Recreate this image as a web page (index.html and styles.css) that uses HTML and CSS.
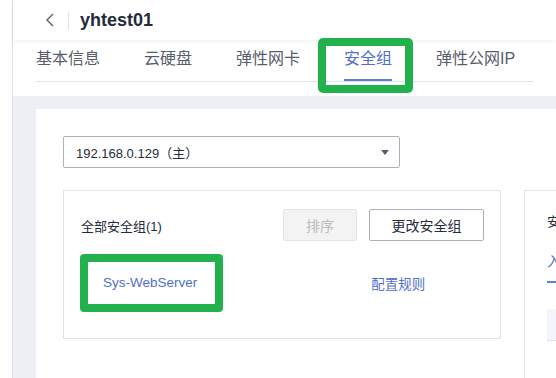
FILE: index.html
```html
<!DOCTYPE html>
<html lang="zh-CN">
<head>
    <meta charset="UTF-8">
    <meta name="viewport" content="width=device-width, initial-scale=1.0">
    <title>yhtest01 - 安全组</title>
    <link rel="stylesheet" href="styles.css">
</head>
<body>
    <div class="page">
        <div class="rail"></div>
        <div class="main">
            <header class="head">
                <svg class="back" width="10" height="14" viewBox="0 0 10 14">
                    <path d="M8 1 L2 7 L8 13" fill="none" stroke="#575d6c" stroke-width="1.4"/>
                </svg>
                <span class="sep"></span>
                <h1 class="title">yhtest01</h1>
            </header>

            <nav class="tabs">
                <div class="tab-list">
                    <a class="tab">基本信息</a>
                    <a class="tab">云硬盘</a>
                    <a class="tab">弹性网卡</a>
                    <a class="tab active">安全组<span class="mark"></span></a>
                    <a class="tab">弹性公网IP</a>
                </div>
            </nav>

            <div class="content">
                <div class="panel">
                    <div class="select">
                        <span>192.168.0.129（主）</span>
                        <span class="caret"></span>
                    </div>

                    <div class="cards">
                        <section class="card sg-card">
                            <div class="sg-head">
                                <span class="sg-count">全部安全组(1)</span>
                                <div class="sg-actions">
                                    <button class="btn btn-sort" disabled>排序</button>
                                    <button class="btn btn-change">更改安全组</button>
                                </div>
                            </div>
                            <div class="sg-row">
                                <a class="sg-name">Sys-WebServer</a>
                                <a class="sg-rule">配置规则</a>
                            </div>
                        </section>

                        <section class="card rule-card">
                            <div class="rule-title">安全组规则</div>
                            <div class="rule-tabs">
                                <a class="rule-tab">入方向规则</a>
                            </div>
                            <div class="rule-table-head"></div>
                        </section>
                    </div>
                </div>
            </div>
        </div>
    </div>
</body>
</html>
```

FILE: styles.css
```css
/* Page frame */
body {
    margin: 0;
    font-family: "Liberation Sans", "Noto Sans CJK SC", sans-serif;
    color: #252b3a;
    background: #fff;
}
.page {
    display: flex;
    height: 100vh;
    overflow: hidden;
}
.rail {
    width: 12px;
    flex: none;
    background: #fff;
    border-right: 1px solid #dcdee3;
}
.main {
    flex: 1;
    min-width: 0;
    display: flex;
    flex-direction: column;
    background: #eef0f5;
}

/* Header */
.head {
    height: 40px;
    flex: none;
    display: flex;
    align-items: center;
    padding-left: 32px;
    background: #fff;
    position: relative;
    z-index: 1;
    box-shadow: 0 2px 4px rgba(0, 0, 0, 0.05);
}
.back {
    display: block;
}
.sep {
    width: 1px;
    height: 17px;
    background: #dfe1e6;
    margin: 0 11px 0 13px;
}
.title {
    margin: 0;
    font-size: 18px;
    font-weight: bold;
    color: #252b3a;
}

/* Tabs */
.tabs {
    flex: none;
    background: #fff;
    padding: 7px 23px 14px;
}
.tab-list {
    display: flex;
    gap: 44px;
    border-bottom: 1px solid #dfe1e6;
}
.tab {
    position: relative;
    font-size: 16px;
    line-height: 24px;
    padding-bottom: 10px;
    color: #575d6c;
    white-space: nowrap;
}
.tab.active {
    color: #526ecc;
}
.tab.active::after {
    content: "";
    position: absolute;
    left: 0;
    right: 0;
    bottom: 0;
    height: 2px;
    background: #5e7ce0;
}
.mark {
    position: absolute;
    left: -26px;
    right: -21px;
    top: -9px;
    bottom: -12px;
    border: 8px solid #22b14c;
    border-radius: 5px;
    z-index: 2;
}

/* Content */
.content {
    flex: 1;
    padding: 13px 0 0 23px;
}
.panel {
    height: 100%;
    background: #fff;
    padding: 27px 0 0 27px;
    box-sizing: border-box;
}
.select {
    width: 337px;
    height: 32px;
    box-sizing: border-box;
    border: 1px solid #adb0b8;
    border-radius: 2px;
    display: flex;
    align-items: center;
    justify-content: space-between;
    padding: 0 10px 0 12px;
    font-size: 13px;
}
.caret {
    width: 0;
    height: 0;
    border-left: 4px solid transparent;
    border-right: 4px solid transparent;
    border-top: 5px solid #575d6c;
}

.cards {
    display: flex;
    gap: 23px;
    margin-top: 22px;
    align-items: flex-start;
}
.card {
    border: 1px solid #dfe1e6;
    box-sizing: border-box;
}
.sg-card {
    width: 438px;
    flex: none;
    padding: 18px 16px 26px 16px;
}
.sg-head {
    display: flex;
    align-items: center;
    justify-content: space-between;
}
.sg-count {
    font-size: 13px;
    padding-left: 1px;
}
.sg-actions {
    display: flex;
    gap: 12px;
}
.btn {
    height: 32px;
    box-sizing: border-box;
    padding: 0;
    font-family: inherit;
    font-size: 14px;
    border-radius: 2px;
    background: #fff;
}
.btn-sort {
    width: 74px;
    background: #f3f3f3;
    border: 1px solid #e3e3e3;
    color: #bbbbbb;
}
.btn-change {
    width: 115px;
    border: 1px solid #adb0b8;
    color: #252b3a;
}
.sg-row {
    display: flex;
    align-items: center;
    margin-top: 13px;
}
.sg-name {
    border: 8px solid #22b14c;
    border-radius: 4px;
    line-height: 42px;
    padding: 0 18px 0 15px;
    font-size: 13.5px;
    color: #526ecc;
}
.sg-rule {
    margin-left: 148px;
    font-size: 13.5px;
    color: #526ecc;
}

.rule-card {
    flex: 1;
    min-width: 0;
    height: 260px;
    border-right: none;
    padding: 22px 0 0 22px;
    overflow: hidden;
    white-space: nowrap;
}
.rule-title {
    font-size: 13px;
    line-height: 18px;
}
.rule-tabs {
    margin-top: 21px;
}
.rule-tab {
    display: inline-block;
    font-size: 14px;
    line-height: 18px;
    padding-bottom: 11px;
    color: #526ecc;
    border-bottom: 2px solid #5e7ce0;
}
.rule-table-head {
    margin-top: 26px;
    height: 31px;
    background: #f3f5fb;
    border-bottom: 1px solid #dfe1e6;
}
```
